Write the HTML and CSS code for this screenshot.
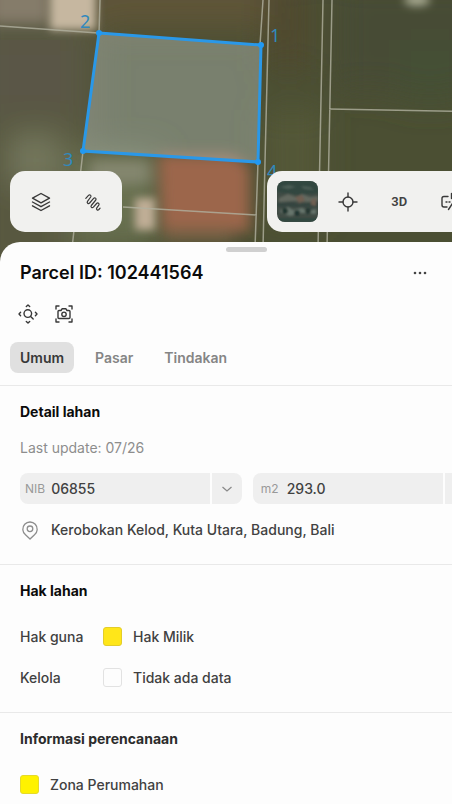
FILE: index.html
```
<!DOCTYPE html>
<html lang="id">
<head>
  <meta charset="UTF-8" />
  <meta name="viewport" content="width=device-width, initial-scale=1.0"/>
  <title>Parcel ID: 102441564</title>
  <link rel="stylesheet" href="styles.css">
</head>
<body>
  <div class="page">
    <div class="map">
      <svg class="map-canvas" viewBox="0 0 493 264" preserveAspectRatio="xMinYMin slice" role="img" aria-label="Peta lahan">
        <defs>
          <filter id="soft" x="-20%" y="-20%" width="140%" height="140%"><feGaussianBlur stdDeviation="7"/></filter>
          <filter id="softer" x="-30%" y="-30%" width="160%" height="160%"><feGaussianBlur stdDeviation="16"/></filter>
          <filter id="edge" x="-30%" y="-30%" width="160%" height="160%"><feGaussianBlur stdDeviation="4"/></filter>
        </defs>
        <!-- ground -->
        <rect width="493" height="264" fill="#4b4f33"/>
        <g filter="url(#softer)">
          <rect x="-30" y="-30" width="130" height="310" fill="#58583f"/>
          <rect x="-30" y="40" width="105" height="70" fill="#5a5746"/>
          <rect x="90" y="-30" width="190" height="60" fill="#5f5438"/>
          <rect x="335" y="-20" width="170" height="110" fill="#474c34"/>
          <rect x="400" y="40" width="60" height="60" fill="#455035"/>
          <rect x="265" y="-20" width="45" height="90" fill="#50482f"/>
          <rect x="265" y="110" width="55" height="110" fill="#555839"/>
          <rect x="10" y="135" width="50" height="50" fill="#76795f"/>
          <rect x="70" y="150" width="90" height="100" fill="#68704f"/>
        </g>
        <g filter="url(#soft)">
          <rect x="-10" y="-20" width="60" height="44" fill="#857c6b"/>
          <rect x="90" y="160" width="60" height="24" fill="#85876f"/>
          <path d="M158 154h74l18 12v66h-88z" fill="#9c664b"/>
          <rect x="166" y="228" width="66" height="14" fill="#756044"/>
        </g>
        <g filter="url(#edge)">
          <rect x="50" y="-12" width="46" height="42" fill="#c6b7a0"/>
          <rect x="135" y="198" width="20" height="32" fill="#c0ae96"/>
          <ellipse cx="417" cy="0" rx="13" ry="6" fill="#a9ab93"/>
        </g>
        <!-- neighbouring boundaries -->
        <g class="boundary">
          <path d="M0 26l98 7M100 0l-1 33M83 151l-11 97M263 0l-3 45M258 162l-3 86M269 0l-4 162-2 86M323 0l-5 248M332 0l-5 248M329 109l164 3M123 207l134 8"/>
        </g>
        <!-- selected parcel -->
        <path class="parcel" d="M99 33l162 12-3 117-175-11z"/>
        <g class="vertex">
          <circle cx="99" cy="33" r="3"/>
          <circle cx="261" cy="45" r="3"/>
          <circle cx="258" cy="162" r="3"/>
          <circle cx="83" cy="151" r="3"/>
        </g>
        <g class="vertex-label">
          <text x="80" y="28">2</text>
          <text x="270" y="42">1</text>
          <text x="63" y="166">3</text>
          <text x="267" y="178">4</text>
        </g>
      </svg>

      <div class="toolbars">
        <div class="toolbar">
          <button class="tool" aria-label="Lapisan">
            <svg class="icon" viewBox="0 0 20 20"><path d="M10 1.500l8.500 4.700-8.500 4.700-8.500-4.700z"/><path d="M1.500 10l8.500 4.700 8.500-4.700"/><path d="M1.500 13.800l8.500 4.700 8.500-4.700"/></svg>
          </button>
          <button class="tool" aria-label="Gambar">
            <svg class="icon squiggle" viewBox="0 0 20 20"><path d="M3.800 6.300l2.700-3c1.300-1.300 3.200.2 2.200 1.700L5.500 9.300c-1 1.500.8 3 2.100 1.700l4-4.700c1.300-1.300 3.200.2 2.200 1.700l-4.500 5.500c-1 1.500.8 3 2.100 1.700l3.200-3.700c1.300-1.300 3.200.2 2.200 1.700l-2 2.600c-1 1.500.8 3 2.100 1.700l1.200-1.400"/></svg>
          </button>
        </div>
        <div class="toolbar">
          <button class="tool" aria-label="Citra satelit">
            <svg class="thumb" viewBox="0 0 41 41">
              <defs><filter id="thumbBlur"><feGaussianBlur stdDeviation="1.200"/></filter></defs>
              <rect width="41" height="41" fill="#414c45"/>
              <g filter="url(#thumbBlur)">
                <path d="M0 0h41v12l-20 2-21-3z" fill="#304640"/>
                <path d="M3 6l9-2 7 2-8 2zM24 5l9 1 4 3-10-1z" fill="#4e5f57"/>
                <path d="M2 17l9-4 8 3 6-3 8 3 8-1v5l-10 1-14-1-15 1z" fill="#62685f"/>
                <path d="M0 22l14-1 8 2 19-2v5H0z" fill="#35453f"/>
                <path d="M3 29l8-3 5 3 9-2 6 3 8-2v5l-14-1-12 3-9-3z" fill="#66746c"/>
                <path d="M18 16l7-2 3 6-6 2zM34 19l5-2v8l-5-1z" fill="#6f5f51"/>
                <circle cx="8" cy="30" r="3" fill="#21352f"/>
                <circle cx="20" cy="32" r="3" fill="#233630"/>
                <circle cx="31" cy="30" r="3" fill="#263832"/>
                <path d="M0 37h41v4H0z" fill="#33463f"/>
              </g>
            </svg>
          </button>
          <button class="tool" aria-label="Lokasi saya">
            <svg class="icon" viewBox="0 0 20 20"><circle cx="10" cy="10" r="5"/><path d="M10 1v4M10 15v4M1 10h4M15 10h4"/></svg>
          </button>
          <button class="tool tool-text">3D</button>
          <button class="tool" aria-label="Pilih area">
            <svg class="icon" viewBox="0 0 20 20"><path d="M8 4.500H4a2 2 0 0 0-2 2v6.500a2 2 0 0 0 2 2h3M6 10h1M9 10h1M11.500 1.500v5M8.500 17.500l4-6M12 4.500h3a2 2 0 0 1 2 2v4"/></svg>
          </button>
        </div>
      </div>
    </div>

    <main class="sheet">
      <div class="handle"></div>
      <header class="title-row">
        <h1>Parcel ID: 102441564</h1>
        <button class="icon-button" aria-label="Menu lainnya">
          <svg class="dots" viewBox="0 0 20 20"><circle cx="5" cy="10" r="1.300"/><circle cx="10" cy="10" r="1.300"/><circle cx="15" cy="10" r="1.300"/></svg>
        </button>
      </header>

      <div class="actions">
        <button class="icon-button" aria-label="Perbesar ke lahan">
          <svg class="icon" viewBox="0 0 20 20"><circle cx="9.800" cy="9.600" r="3.800"/><path d="M12.600 12.400l2.600 2.600M8.300 2.600L10 1l1.700 1.600M8.300 17.400L10 19l1.700-1.600M2.600 8.300L1 10l1.600 1.700M17.400 8.300L19 10l-1.600 1.700"/></svg>
        </button>
        <button class="icon-button" aria-label="Tangkap gambar">
          <svg class="icon" viewBox="0 0 20 20"><path d="M2 5V2h3M15 2h3v3M18 15v3h-3M5 18H2v-3"/><path d="M5 6.500h2L8.200 4.700h3.600L13 6.500h2q1 0 1 1v6q0 1-1 1H5q-1 0-1-1v-6q0-1 1-1z"/><circle cx="10" cy="10.300" r="2.200"/></svg>
        </button>
      </div>

      <nav class="tabs">
        <button class="tab active">Umum</button>
        <button class="tab">Pasar</button>
        <button class="tab">Tindakan</button>
      </nav>

      <section class="section">
        <h2>Detail lahan</h2>
        <p class="updated">Last update: 07/26</p>
        <div class="fields">
          <div class="field">
            <div class="field-main">
              <label for="nib">NIB</label>
              <input type="text" id="nib" value="06855" readonly />
            </div>
            <button class="field-toggle" aria-label="Pilih NIB">
              <svg viewBox="0 0 12 12"><path d="M1.500 4l4.500 4 4.500-4"/></svg>
            </button>
          </div>
          <div class="field">
            <div class="field-main field-area">
              <label for="area">m2</label>
              <input type="text" id="area" value="293.0" readonly />
            </div>
            <button class="field-toggle" aria-label="Pilih satuan">
              <svg viewBox="0 0 12 12"><path d="M1.500 4l4.500 4 4.500-4"/></svg>
            </button>
          </div>
        </div>
        <div class="row">
          <svg class="pin" viewBox="0 0 20 20"><path d="M10 19l-4.500-4.200a7.200 7.200 0 1 1 9 0z"/><circle cx="10" cy="8.800" r="2.800"/></svg>
          <span>Kerobokan Kelod, Kuta Utara, Badung, Bali</span>
        </div>
      </section>

      <section class="section">
        <h2>Hak lahan</h2>
        <div class="rows">
          <div class="row">
            <span class="row-label">Hak guna</span>
            <span class="swatch ownership"></span>
            <span>Hak Milik</span>
          </div>
          <div class="row">
            <span class="row-label">Kelola</span>
            <span class="swatch"></span>
            <span>Tidak ada data</span>
          </div>
        </div>
      </section>

      <section class="section">
        <h2 class="muted-title">Informasi perencanaan</h2>
        <div class="rows">
          <div class="row">
            <span class="swatch residential"></span>
            <span>Zona Perumahan</span>
          </div>
        </div>
      </section>
    </main>
  </div>
</body>
</html>
```
FILE: styles.css
```
* { box-sizing: border-box; }
html { overflow: hidden; }
body { margin: 0; overflow: hidden; font-family: Inter, "Liberation Sans", sans-serif; font-size: 14px; line-height: 31px; color: #414141; background: #fdfdfd; }
h1, h2, p { margin: 0; }
button, input { font: inherit; color: inherit; border: 0; padding: 0; background: none; }
button { cursor: pointer; display: flex; align-items: center; justify-content: center; }

.page { width: 109vw; }

/* map */
.map { display: grid; height: 264px; }
.map-canvas { grid-area: 1 / 1; width: 100%; height: 264px; display: block; }
.boundary { fill: none; stroke: #b0b09f; stroke-width: 1.5; opacity: 0.8; }
.parcel { fill: rgba(178, 188, 182, 0.45); stroke: #2a98e8; stroke-width: 3; }
.vertex { fill: #2199f3; }
.vertex-label { fill: #3189bd; font-family: "Noto Sans", sans-serif; font-size: 18px; }

.toolbars {
  grid-area: 1 / 1;
  align-self: end;
  display: flex;
  justify-content: space-between;
  padding: 0 12px 32px 10px;
}
.toolbar { display: flex; padding: 5px; border-radius: 15px; background: #f1f1ef; }
.tool { width: 51px; height: 51px; }
.tool-text { font-family: Roboto, sans-serif; font-size: 13px; font-weight: 600; }
.thumb { width: 41px; height: 41px; border-radius: 8px; }
.icon { width: 20px; height: 20px; fill: none; stroke: #383838; stroke-width: 1.4; stroke-linecap: round; stroke-linejoin: round; }
.squiggle { stroke-width: 1.2; }

/* bottom sheet */
.sheet {
  position: relative;
  margin-top: -22px;
  padding-top: 5px;
  border-radius: 20px 20px 0 0;
  background: #fdfdfd;
}
.handle { width: 41px; height: 5px; margin: 0 auto 5px; border-radius: 3px; background: #d0d0d0; }
.title-row { display: flex; justify-content: space-between; padding: 0 57px 0 20px; }
h1 { font-size: 18px; font-weight: 600; color: #0b0b0b; }
.icon-button { width: 31px; height: 31px; }
.dots { width: 20px; height: 20px; fill: #444; }
.actions { display: flex; gap: 5px; padding: 10px 12px 13px; }

.tabs { display: flex; gap: 11px; padding: 0 10px 12px; }
.tab { padding: 0 10px; border-radius: 8px; font-weight: 600; color: #858585; }
.tab.active { background: #e0e0e0; color: #383838; }

.section { padding: 10px 18px 19px 20px; border-top: 1px solid #e9e9e9; }
h2 { font-size: 14px; font-weight: 700; color: #0b0b0b; }
.muted-title { color: #2c2c2c; }
.updated { margin: 5px 0 10px; color: #8d8d8d; }

.fields { display: flex; gap: 11px; margin-bottom: 10px; }
.field { flex: 1; min-width: 0; display: flex; gap: 2px; border-radius: 8px; overflow: hidden; }
.field-main { flex: 1; min-width: 0; display: flex; gap: 6px; padding-left: 5px; background: #efefef; }
.field-area { gap: 8px; padding-left: 8px; }
.field-main label { font-size: 12px; color: #999; }
.field-main input { flex: 1; min-width: 0; height: 31px; outline: none; font-weight: 500; }
.field-toggle { width: 30px; background: #efefef; }
.field-toggle svg { width: 12px; height: 12px; fill: none; stroke: #8a8a8a; stroke-width: 1.3; }

.rows { display: grid; gap: 10px; margin-top: 15px; }
.row { display: flex; align-items: center; gap: 11px; font-weight: 500; }
.row-label { width: 72px; }
.pin { width: 20px; height: 20px; fill: none; stroke: #8d8d8d; stroke-width: 1.3; }
.swatch { width: 19px; height: 19px; border: 1px solid #e2e2e2; border-radius: 3px; }
.ownership { background: #ffe619; border-color: #e3cd2a; }
.residential { background: #fff200; border-color: #e5da2a; }
```
